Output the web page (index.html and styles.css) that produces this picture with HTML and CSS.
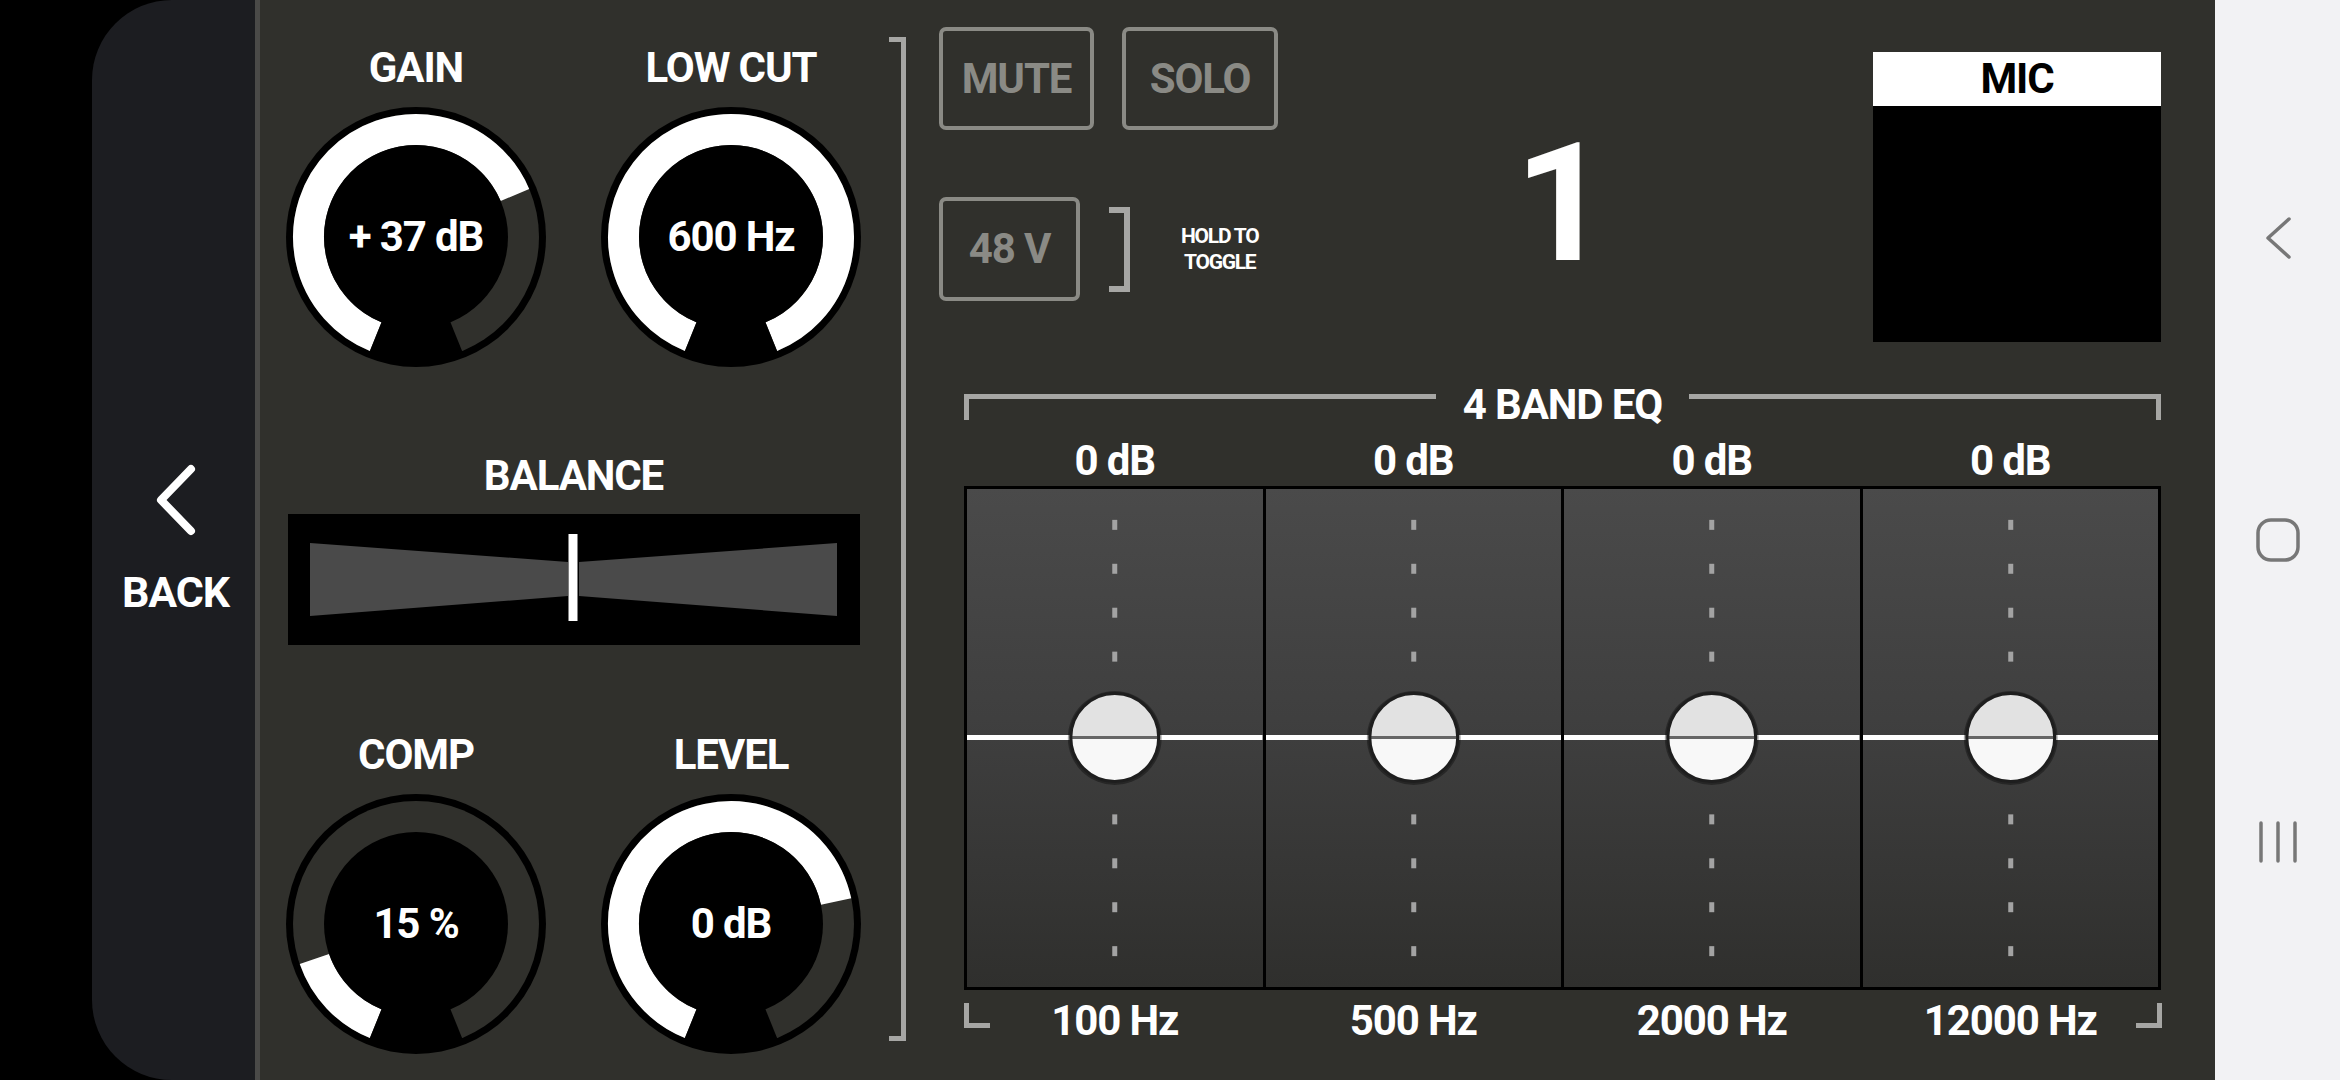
FILE: index.html
```html
<!DOCTYPE html>
<html lang="en">
<head>
<meta charset="utf-8">
<title>Channel 1</title>
<link rel="stylesheet" href="styles.css">
</head>
<body>
<div class="screen">
  <div class="edge"></div>
  <nav class="back">
    <svg class="back-icon" viewBox="0 0 42 72"><polyline points="36,5 6,36 36,67"/></svg>
    <span class="back-label">BACK</span>
  </nav>
  <div class="divider"></div>
  <main class="main">
    <section class="controls">
      <div class="knob-row">
        <div class="ctl">
          <div class="label">GAIN</div>
          <div class="knob">
            <svg viewBox="0 0 260 260">
              <circle cx="130" cy="130" r="130" fill="#000"/>
              <circle cx="130" cy="130" r="123" fill="#30302c"/>
              <path class="arc" d="M89.7 229.7 A107.5 107.5 0 1 1 228.95 88"/>
              <polygon points="130,130 82.8,246.8 130,258 177.2,246.8" fill="#000"/>
              <circle cx="130" cy="130" r="92" fill="#000"/>
            </svg>
            <span class="knob-value">+ 37 dB</span>
          </div>
        </div>
        <div class="ctl">
          <div class="label">LOW CUT</div>
          <div class="knob">
            <svg viewBox="0 0 260 260">
              <circle cx="130" cy="130" r="130" fill="#000"/>
              <circle cx="130" cy="130" r="123" fill="#30302c"/>
              <path class="arc" d="M89.7 229.7 A107.5 107.5 0 1 1 170.3 229.7"/>
              <polygon points="130,130 82.8,246.8 130,258 177.2,246.8" fill="#000"/>
              <circle cx="130" cy="130" r="92" fill="#000"/>
            </svg>
            <span class="knob-value">600 Hz</span>
          </div>
        </div>
      </div>

      <div class="balance">
        <div class="label">BALANCE</div>
        <div class="balance-box">
          <svg viewBox="0 0 572 131">
            <polygon points="22,29 280,48 280,82 22,102" fill="#4a4a4a"/>
            <polygon points="291,48 549,29 549,102 291,82" fill="#4a4a4a"/>
            <rect x="280.5" y="20" width="9" height="87" fill="#fff"/>
          </svg>
        </div>
      </div>

      <div class="knob-row lower">
        <div class="ctl">
          <div class="label">COMP</div>
          <div class="knob">
            <svg viewBox="0 0 260 260">
              <circle cx="130" cy="130" r="130" fill="#000"/>
              <circle cx="130" cy="130" r="123" fill="#30302c"/>
              <path class="arc" d="M89.7 229.7 A107.5 107.5 0 0 1 28.4 165"/>
              <polygon points="130,130 82.8,246.8 130,258 177.2,246.8" fill="#000"/>
              <circle cx="130" cy="130" r="92" fill="#000"/>
            </svg>
            <span class="knob-value">15 %</span>
          </div>
        </div>
        <div class="ctl">
          <div class="label">LEVEL</div>
          <div class="knob">
            <svg viewBox="0 0 260 260">
              <circle cx="130" cy="130" r="130" fill="#000"/>
              <circle cx="130" cy="130" r="123" fill="#30302c"/>
              <path class="arc" d="M89.7 229.7 A107.5 107.5 0 1 1 235.1 107.6"/>
              <polygon points="130,130 82.8,246.8 130,258 177.2,246.8" fill="#000"/>
              <circle cx="130" cy="130" r="92" fill="#000"/>
            </svg>
            <span class="knob-value">0 dB</span>
          </div>
        </div>
      </div>
    </section>

    <div class="bracket"></div>

    <section class="channel">
      <div class="top">
        <div class="buttons">
          <div class="btn-row">
            <div class="btn mute">MUTE</div>
            <div class="btn solo">SOLO</div>
          </div>
          <div class="btn-row phantom">
            <div class="btn v48">48 V</div>
            <div class="mini-bracket"></div>
            <div class="hold">HOLD TO<br>TOGGLE</div>
          </div>
        </div>
        <div class="chan-num">1</div>
        <div class="source">
          <div class="source-head">MIC</div>
        </div>
      </div>

      <div class="eq">
        <div class="eq-head">
          <span class="seg left"></span>
          <span class="eq-title">4 BAND EQ</span>
          <span class="seg right"></span>
        </div>
        <div class="eq-cols eq-db">
          <span class="val c1">0 dB</span>
          <span class="val c2">0 dB</span>
          <span class="val c3">0 dB</span>
          <span class="val c4">0 dB</span>
        </div>
        <div class="eq-grid">
          <div class="band">
            <svg viewBox="0 0 296 498">
              <g fill="#a3a3a3"><rect x="145.5" y="30.5" width="5" height="10"/><rect x="145.5" y="74.5" width="5" height="10"/><rect x="145.5" y="118.5" width="5" height="10"/><rect x="145.5" y="162.5" width="5" height="10"/><rect x="145.5" y="325.5" width="5" height="10"/><rect x="145.5" y="369.5" width="5" height="10"/><rect x="145.5" y="413.5" width="5" height="10"/><rect x="145.5" y="457.5" width="5" height="10"/></g>
              <rect x="0" y="246" width="296" height="5" fill="#fff"/>
              <circle cx="148" cy="249" r="47" fill="rgba(0,0,0,0.35)"/>
              <circle cx="148" cy="248.5" r="44" fill="#f8f8f8"/>
              <path d="M104 248.5 A44 44 0 0 1 192 248.5 Z" fill="#e2e2e2"/>
              <rect x="104" y="247" width="88" height="3" fill="#666"/>
              <circle cx="148" cy="248.5" r="44" fill="none" stroke="#1e1e1e" stroke-width="3"/>
            </svg>
          </div>
          <div class="band">
            <svg viewBox="0 0 296 498">
              <g fill="#a3a3a3"><rect x="145.5" y="30.5" width="5" height="10"/><rect x="145.5" y="74.5" width="5" height="10"/><rect x="145.5" y="118.5" width="5" height="10"/><rect x="145.5" y="162.5" width="5" height="10"/><rect x="145.5" y="325.5" width="5" height="10"/><rect x="145.5" y="369.5" width="5" height="10"/><rect x="145.5" y="413.5" width="5" height="10"/><rect x="145.5" y="457.5" width="5" height="10"/></g>
              <rect x="0" y="246" width="296" height="5" fill="#fff"/>
              <circle cx="148" cy="249" r="47" fill="rgba(0,0,0,0.35)"/>
              <circle cx="148" cy="248.5" r="44" fill="#f8f8f8"/>
              <path d="M104 248.5 A44 44 0 0 1 192 248.5 Z" fill="#e2e2e2"/>
              <rect x="104" y="247" width="88" height="3" fill="#666"/>
              <circle cx="148" cy="248.5" r="44" fill="none" stroke="#1e1e1e" stroke-width="3"/>
            </svg>
          </div>
          <div class="band">
            <svg viewBox="0 0 296 498">
              <g fill="#a3a3a3"><rect x="145.5" y="30.5" width="5" height="10"/><rect x="145.5" y="74.5" width="5" height="10"/><rect x="145.5" y="118.5" width="5" height="10"/><rect x="145.5" y="162.5" width="5" height="10"/><rect x="145.5" y="325.5" width="5" height="10"/><rect x="145.5" y="369.5" width="5" height="10"/><rect x="145.5" y="413.5" width="5" height="10"/><rect x="145.5" y="457.5" width="5" height="10"/></g>
              <rect x="0" y="246" width="296" height="5" fill="#fff"/>
              <circle cx="148" cy="249" r="47" fill="rgba(0,0,0,0.35)"/>
              <circle cx="148" cy="248.5" r="44" fill="#f8f8f8"/>
              <path d="M104 248.5 A44 44 0 0 1 192 248.5 Z" fill="#e2e2e2"/>
              <rect x="104" y="247" width="88" height="3" fill="#666"/>
              <circle cx="148" cy="248.5" r="44" fill="none" stroke="#1e1e1e" stroke-width="3"/>
            </svg>
          </div>
          <div class="band">
            <svg viewBox="0 0 296 498">
              <g fill="#a3a3a3"><rect x="145.5" y="30.5" width="5" height="10"/><rect x="145.5" y="74.5" width="5" height="10"/><rect x="145.5" y="118.5" width="5" height="10"/><rect x="145.5" y="162.5" width="5" height="10"/><rect x="145.5" y="325.5" width="5" height="10"/><rect x="145.5" y="369.5" width="5" height="10"/><rect x="145.5" y="413.5" width="5" height="10"/><rect x="145.5" y="457.5" width="5" height="10"/></g>
              <rect x="0" y="246" width="296" height="5" fill="#fff"/>
              <circle cx="148" cy="249" r="47" fill="rgba(0,0,0,0.35)"/>
              <circle cx="148" cy="248.5" r="44" fill="#f8f8f8"/>
              <path d="M104 248.5 A44 44 0 0 1 192 248.5 Z" fill="#e2e2e2"/>
              <rect x="104" y="247" width="88" height="3" fill="#666"/>
              <circle cx="148" cy="248.5" r="44" fill="none" stroke="#1e1e1e" stroke-width="3"/>
            </svg>
          </div>
        </div>
        <div class="eq-cols eq-hz">
          <span class="corner l"></span>
          <span class="val c1">100 Hz</span>
          <span class="val c2">500 Hz</span>
          <span class="val c3">2000 Hz</span>
          <span class="val c4">12000 Hz</span>
          <span class="corner r"></span>
        </div>
      </div>
    </section>
  </main>
  <nav class="sysnav">
    <svg viewBox="0 0 44 44"><polyline points="33,3 12,22 33,41"/></svg>
    <svg viewBox="0 0 44 44"><rect x="2" y="2" width="40" height="40" rx="13"/></svg>
    <svg viewBox="0 0 44 44"><line x1="5" y1="3" x2="5" y2="41"/><line x1="22" y1="3" x2="22" y2="41"/><line x1="39" y1="3" x2="39" y2="41"/></svg>
  </nav>
</div>
</body>
</html>
```

FILE: styles.css
```css
* {
  box-sizing: border-box;
  margin: 0;
  padding: 0;
}

html,
body {
  width: 2340px;
  height: 1080px;
  background: #000;
  overflow: hidden;
}

body {
  font-family: Roboto, "Liberation Sans", sans-serif;
  font-weight: 700;
  color: #fff;
  letter-spacing: -0.07em;
}

.screen {
  display: flex;
  width: 2340px;
  height: 1080px;
}

.edge {
  flex: none;
  width: 92px;
  background: #000;
}

/* back panel */
.back {
  flex: none;
  width: 163px;
  background: #1c1d21;
  border-radius: 80px 0 0 80px;
  display: flex;
  flex-direction: column;
  align-items: center;
  justify-content: center;
  padding-left: 4px;
}

.back-icon {
  width: 42px;
  height: 72px;
  fill: none;
  stroke: #fff;
  stroke-width: 8;
  stroke-linecap: round;
  stroke-linejoin: round;
}

.back-label {
  font-size: 43px;
  line-height: 50px;
  margin-top: 31px;
}

.divider {
  flex: none;
  width: 5px;
  background: #4a4a48;
}

/* main panel */
.main {
  flex: 1;
  background: #30302c;
  display: flex;
  align-items: flex-start;
}

.controls {
  flex: none;
  width: 575px;
  margin-left: 26px;
  padding-top: 43px;
}

.label {
  font-size: 42px;
  line-height: 50px;
  text-align: center;
}

.knob-row {
  display: grid;
  grid-template-columns: 260px 260px;
  column-gap: 55px;
}

.knob-row.lower {
  margin-top: 85px;
}

.knob {
  display: grid;
  width: 260px;
  height: 260px;
  margin-top: 14px;
}

.knob > * {
  grid-area: 1 / 1;
}

.knob svg {
  display: block;
  width: 260px;
  height: 260px;
}

.knob .arc {
  fill: none;
  stroke: #fff;
  stroke-width: 31;
}

.knob-value {
  place-self: center;
  font-size: 42px;
  line-height: 50px;
}

.balance {
  margin-top: 84px;
}

.balance-box {
  width: 572px;
  height: 131px;
  margin: 13px auto 0;
  background: #000;
}

.balance-box svg {
  display: block;
  width: 100%;
  height: 100%;
}

.bracket {
  flex: none;
  width: 17px;
  height: 1004px;
  margin-left: 28px;
  margin-top: 37px;
  border: 5px solid #a6a6a4;
  border-left: none;
}

/* channel section */
.channel {
  flex: none;
  width: 1222px;
  margin-left: 33px;
  padding-top: 27px;
}

.top {
  display: grid;
  grid-template-columns: 340px 1fr 288px;
  align-items: start;
  height: 315px;
}

.btn-row {
  display: flex;
  align-items: center;
}

.btn {
  border: 4px solid #8a8a85;
  border-radius: 7px;
  color: #8a8a85;
  font-size: 42px;
  line-height: 50px;
  display: flex;
  align-items: center;
  justify-content: center;
}

.mute {
  width: 155px;
  height: 103px;
}

.solo {
  width: 156px;
  height: 103px;
  margin-left: 28px;
}

.phantom {
  margin-top: 67px;
}

.v48 {
  width: 141px;
  height: 104px;
}

.mini-bracket {
  flex: none;
  width: 21px;
  height: 85px;
  margin-left: 29px;
  border: 6px solid #a6a6a4;
  border-left: none;
}

.hold {
  font-size: 21px;
  line-height: 26px;
  text-align: center;
  margin-left: 51px;
  letter-spacing: -0.06em;
  white-space: nowrap;
}

.chan-num {
  font-size: 166px;
  line-height: 166px;
  text-align: center;
  padding-right: 28px;
  margin-top: 94px;
  letter-spacing: 0;
}

.source {
  width: 288px;
  height: 290px;
  margin-top: 25px;
  background: #000;
}

.source-head {
  height: 54px;
  background: #fff;
  color: #000;
  font-size: 42px;
  line-height: 54px;
  text-align: center;
}

/* EQ */
.eq {
  margin-left: 25px;
  margin-top: 52px;
}

.eq-head {
  display: flex;
  align-items: flex-start;
  height: 26px;
}

.seg {
  flex: 1;
  height: 26px;
  border-top: 5px solid #a6a6a4;
}

.seg.left {
  border-left: 5px solid #a6a6a4;
}

.seg.right {
  border-right: 5px solid #a6a6a4;
}

.eq-title {
  font-size: 42px;
  line-height: 50px;
  padding: 0 27px;
  margin-top: -14px;
  white-space: nowrap;
}

.eq-cols {
  display: grid;
  grid-template-columns: repeat(4, 1fr);
  column-gap: 3px;
  padding: 0 3px;
}

.eq-db {
  margin-top: 16px;
}

.eq-hz {
  margin-top: 6px;
}

.val {
  grid-row: 1;
  text-align: center;
  font-size: 42px;
  line-height: 50px;
  white-space: nowrap;
}

.c1 { grid-column: 1; }
.c2 { grid-column: 2; }
.c3 { grid-column: 3; }
.c4 { grid-column: 4; }

.corner {
  grid-row: 1;
  width: 26px;
  height: 25px;
  margin-top: 7px;
  align-self: start;
  border-bottom: 5px solid #a6a6a4;
}

.corner.l {
  grid-column: 1;
  justify-self: start;
  margin-left: -3px;
  border-left: 5px solid #a6a6a4;
}

.corner.r {
  grid-column: 4;
  justify-self: end;
  margin-right: -4px;
  border-right: 5px solid #a6a6a4;
}

.eq-grid {
  display: grid;
  grid-template-columns: repeat(4, 1fr);
  gap: 3px;
  height: 504px;
  border: 3px solid #000;
  background: #000;
}

.band {
  background: linear-gradient(to bottom, #4a4a4a 0%, #3e3e3e 50%, #2f2f2d 100%);
}

.band svg {
  display: block;
  width: 100%;
  height: 100%;
}

/* system navigation */
.sysnav {
  flex: none;
  width: 125px;
  background: #f2f2f4;
  display: flex;
  flex-direction: column;
  align-items: center;
  justify-content: center;
  gap: 258px;
}

.sysnav svg {
  width: 44px;
  height: 44px;
  fill: none;
  stroke: #777;
  stroke-width: 3.5;
  stroke-linecap: round;
  stroke-linejoin: round;
}
```
